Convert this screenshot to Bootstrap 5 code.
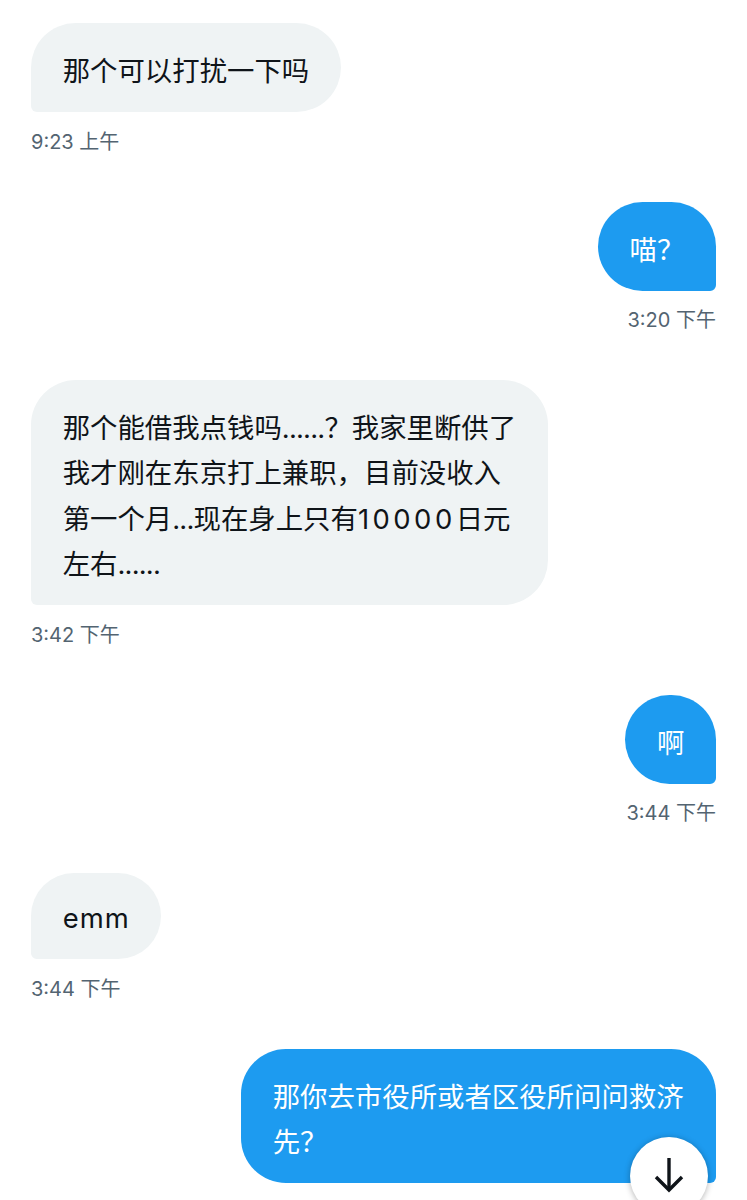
<!DOCTYPE html>
<html lang="zh-CN">
<head>
  <meta charset="UTF-8">
  <title>Messages</title>
  <meta name="viewport" content="width=device-width, initial-scale=1">
  <link href="https://cdn.jsdelivr.net/npm/bootstrap@5.3.0/dist/css/bootstrap.min.css" rel="stylesheet">
  <style>
    html, body {
      height: 1200px;
      overflow: hidden;
    }
    body {
      background: #fff;
      font-family: Inter, "Noto Sans CJK SC", sans-serif;
    }
    .chat-log {
      padding: 23px 31px 0;
    }
    .msg {
      margin-bottom: 48px;
    }
    .bubble {
      padding: 26px 31.7px 17.6px;
      font-size: 27.4px;
      line-height: 45.4px;
      border-radius: 45px;
    }
    .msg-in .bubble {
      background: #eff3f4;
      color: #0f1419;
      border-bottom-left-radius: 6px;
      white-space: nowrap;
    }
    .msg-out .bubble {
      background: #1d9bf0;
      color: #fff;
      border-bottom-right-radius: 6px;
      max-width: 475px;
    }
    .msg-in .bubble-latin {
      padding-top: 24px;
      padding-bottom: 19.6px;
      line-height: 42.4px;
      letter-spacing: 1px;
    }
    .digits {
      letter-spacing: 3.5px;
    }
    .dots {
      letter-spacing: -.8px;
    }
    .msg-time {
      margin-top: 17.5px;
      font-size: 20px;
      line-height: 24px;
      color: #536471;
    }
    .down-btn {
      position: absolute;
      left: 630px;
      top: 1137px;
      width: 78px;
      height: 78px;
      background: #fff;
      box-shadow: 0 1px 6px rgba(0, 0, 0, .3);
    }
  </style>
</head>
<body>
  <div class="chat-log d-flex flex-column">
    <div class="msg msg-in d-flex flex-column align-items-start">
      <div class="bubble">那个可以打扰一下吗</div>
      <div class="msg-time">9:23 上午</div>
    </div>
    <div class="msg msg-out d-flex flex-column align-items-end">
      <div class="bubble">喵？</div>
      <div class="msg-time">3:20 下午</div>
    </div>
    <div class="msg msg-in d-flex flex-column align-items-start">
      <div class="bubble">那个能借我点钱吗<span class="dots">......</span>？我家里断供了<br>我才刚在东京打上兼职，目前没收入<br>第一个月<span class="dots">...</span>现在身上只有<span class="digits">10000</span>日元<br>左右<span class="dots">......</span></div>
      <div class="msg-time">3:42 下午</div>
    </div>
    <div class="msg msg-out d-flex flex-column align-items-end">
      <div class="bubble">啊</div>
      <div class="msg-time">3:44 下午</div>
    </div>
    <div class="msg msg-in d-flex flex-column align-items-start">
      <div class="bubble bubble-latin">emm</div>
      <div class="msg-time">3:44 下午</div>
    </div>
    <div class="msg msg-out d-flex flex-column align-items-end">
      <div class="bubble">那你去市役所或者区役所问问救济先？</div>
    </div>
  </div>

  <button class="down-btn btn rounded-circle border-0 p-0 d-flex align-items-center justify-content-center" aria-label="Scroll to bottom">
    <svg width="30" height="36" viewBox="0 0 30 36" fill="none" stroke="#0f1419" stroke-width="3.4">
      <path d="M15 0V32"/>
      <path d="M2 19L15 32L28 19"/>
    </svg>
  </button>
</body>
</html>
